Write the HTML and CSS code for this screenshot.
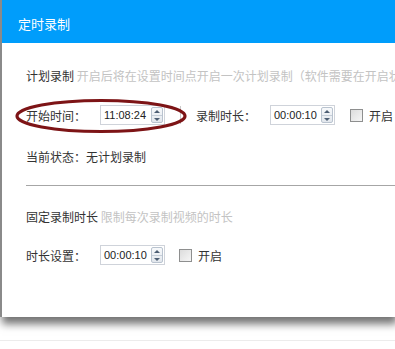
FILE: index.html
```html
<!DOCTYPE html>
<html lang="zh-CN">
<head>
  <meta charset="UTF-8">
  <title>定时录制</title>
  <link rel="stylesheet" href="styles.css">
</head>
<body>
  <div class="dialog">
    <div class="title">定时录制</div>
    <div class="content">
      <!-- 计划录制 -->
      <div class="heading">计划录制 <span class="hint">开启后将在设置时间点开启一次计划录制（软件需要在开启状</span></div>
      <div class="row row-plan">
        <span class="label">开始时间：</span>
        <div class="spin">
          <span class="value">11:08:24</span>
          <span class="arrows"><i class="up"></i><i class="down"></i></span>
        </div>
        <span class="sep"></span>
        <span class="label">录制时长：</span>
        <div class="spin">
          <span class="value">00:00:10</span>
          <span class="arrows"><i class="up"></i><i class="down"></i></span>
        </div>
        <span class="check"></span>
        <span class="check-text">开启</span>
        <svg class="mark" width="174" height="36" viewBox="0 0 174 36">
          <ellipse cx="87" cy="18" rx="84" ry="15.5" fill="none" stroke="#7d1416" stroke-width="3.2"/>
        </svg>
      </div>
      <div class="status">当前状态：无计划录制</div>
      <div class="divider"></div>

      <!-- 固定录制时长 -->
      <div class="heading">固定录制时长 <span class="hint">限制每次录制视频的时长</span></div>
      <div class="row row-last">
        <span class="label">时长设置：</span>
        <div class="spin">
          <span class="value">00:00:10</span>
          <span class="arrows"><i class="up"></i><i class="down"></i></span>
        </div>
        <span class="check check-near"></span>
        <span class="check-text">开启</span>
      </div>
    </div>
  </div>
  <div class="floor"></div>
</body>
</html>
```

FILE: styles.css
```css
body {
  margin: 0;
  background: #fff;
  font-family: "Noto Sans CJK SC", "Liberation Sans", sans-serif;
  font-size: 12px;
  color: #333;
  overflow: hidden;
  width: 395px;
  height: 349px;
}

.dialog {
  width: 393px;
  border-left: 2px solid #8a8a8a;
  background: #fff;
  box-shadow: 2px 7px 8px rgba(0, 0, 0, 0.55);
}

.title {
  height: 43px;
  background: #009dfb;
  color: #fff;
  font-size: 13px;
  line-height: 47px;
  padding-left: 16px;
}

.content {
  padding: 23px 0 0 24px;
  height: 251px;
  overflow: hidden;
}

.heading {
  line-height: 20px;
  white-space: nowrap;
}

.hint {
  color: #c3c3c3;
}

.row {
  position: relative;
  display: flex;
  align-items: center;
  height: 22px;
  margin-top: 18px;
}

.row-last {
  margin-top: 17px;
}

.label {
  width: 74px;
}

.spin {
  display: flex;
  align-items: center;
  justify-content: space-between;
  width: 65px;
  height: 20px;
  border: 1px solid #cfd3da;
  padding-left: 3px;
  box-sizing: border-box;
  font-family: "Liberation Sans", sans-serif;
  font-size: 11px;
  color: #222;
}

.arrows {
  display: flex;
  flex-direction: column;
  width: 12px;
  height: 16px;
  margin-right: 1px;
  border: 1px solid #b9c3cf;
  border-radius: 2px;
  background: linear-gradient(#f7f9fb, #e2e7ed);
  box-sizing: border-box;
}

.arrows i {
  flex: 1;
  position: relative;
}

.arrows .up {
  border-bottom: 1px solid #c6ced8;
}

.arrows i::after {
  content: "";
  position: absolute;
  left: 2px;
  border-left: 3px solid transparent;
  border-right: 3px solid transparent;
}

.arrows .up::after {
  top: 2px;
  border-bottom: 3px solid #4d5e73;
}

.arrows .down::after {
  top: 2px;
  border-top: 3px solid #4d5e73;
}

.sep {
  width: 1px;
  height: 18px;
  background: #c8c8c8;
  margin: 0 15px;
}

.check {
  width: 11px;
  height: 11px;
  border: 1px solid #8e8f8f;
  background: linear-gradient(135deg, #dcdcdc, #f6f6f6);
  margin-left: 15px;
}

.check-near {
  margin-left: 14px;
}

.check-text {
  margin-left: 6px;
}

.mark {
  position: absolute;
  left: -12px;
  top: -6px;
}

.status {
  line-height: 20px;
  margin-top: 21px;
}

.divider {
  height: 1px;
  background: #a6a6a6;
  margin: 18px 0 21px;
}

.floor {
  height: 1px;
  background: #ececec;
  margin-top: 23px;
}
```
